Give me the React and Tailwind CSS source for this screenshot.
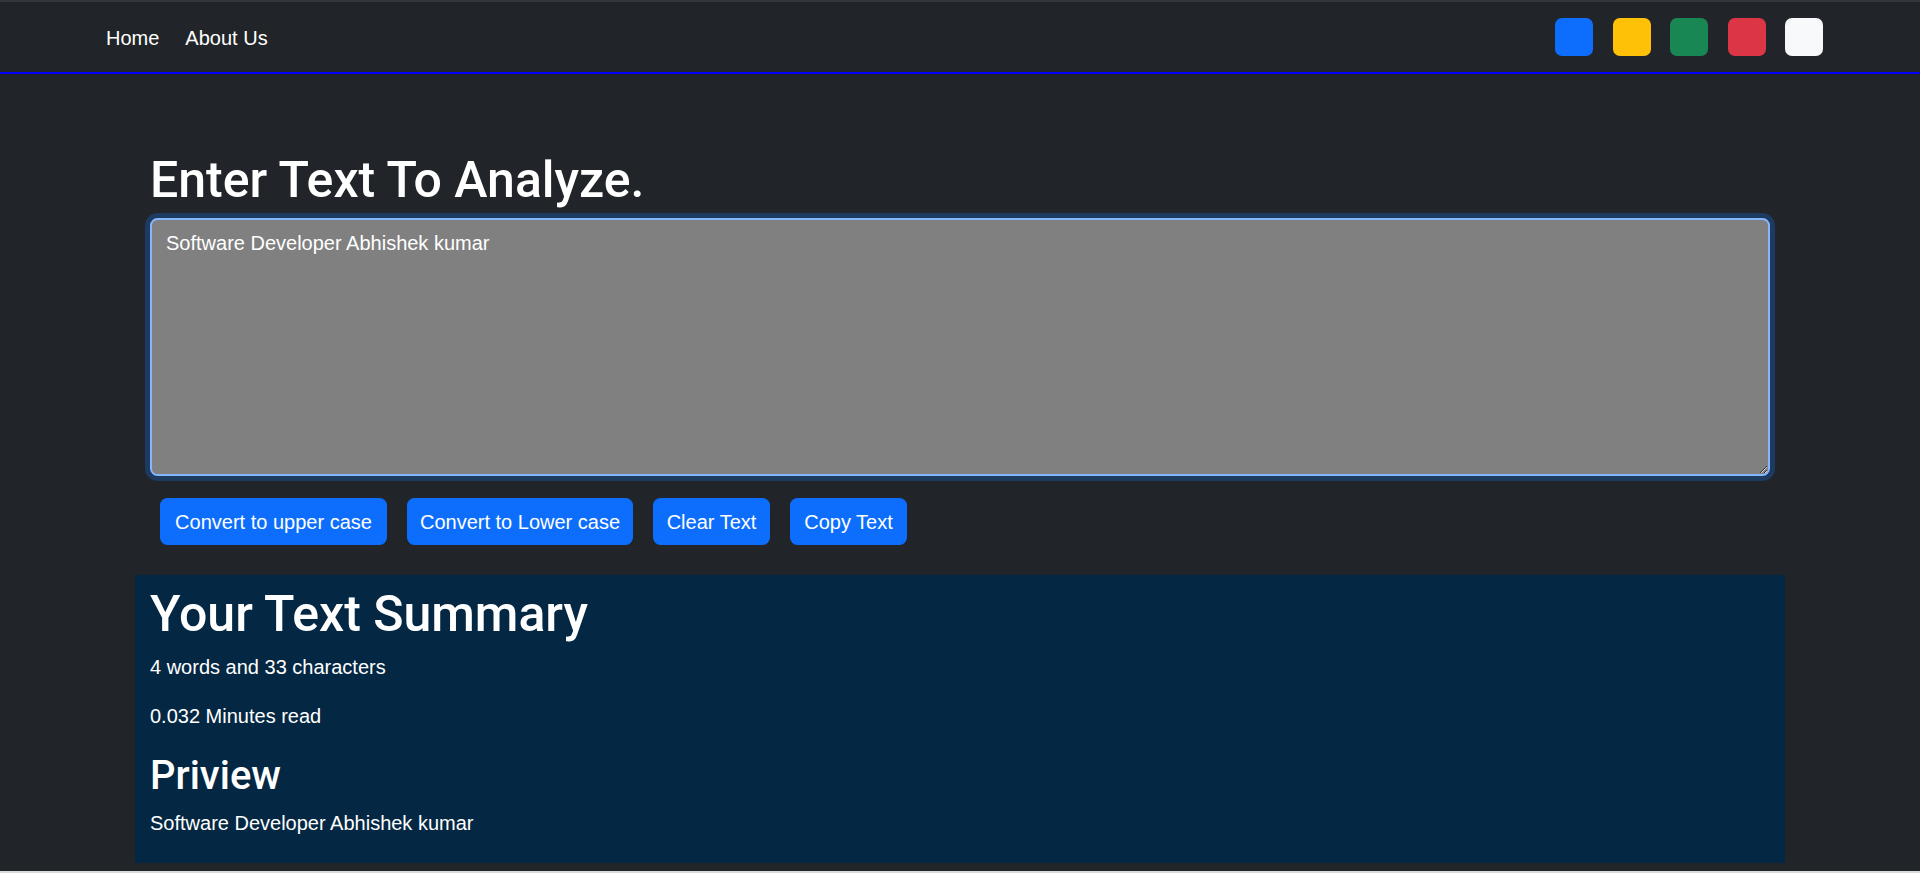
import React from "react";

const body = { fontFamily: '"Liberation Sans", Arial, sans-serif' };
const head = { fontFamily: 'Roboto, "Liberation Sans", sans-serif' };

export default function App() {
  const squares = ["bg-[#0d6efd]", "bg-[#ffc107]", "bg-[#198754]", "bg-[#dc3545]", "bg-[#f8f9fa]"];
  const text = "Software Developer Abhishek kumar";
  return (
    <div className="h-[873px] overflow-hidden flex flex-col bg-[#212529] text-white" style={body}>
      <div className="h-[2px] bg-[#33373c]" />
      <nav className="h-[72px] shrink-0 bg-[#212529] border-b-2 border-[#0000ff] flex items-center justify-between pl-[106px] pr-[97px]">
        <div className="flex gap-[26px] text-[20px] leading-[30px] pt-[2px]">
          <a className="text-white">Home</a>
          <a className="text-white">About Us</a>
        </div>
        <div className="flex gap-[19.5px]">
          {squares.map((c, i) => (
            <div key={i} className={`w-[38px] h-[38px] rounded-[7px] ${c}`} />
          ))}
        </div>
      </nav>
      <main className="flex-1 flex flex-col">
        <div className="w-[1650px] ml-[135px] px-[15px] pt-[76px]">
          <h1 className="text-[50px] leading-[60px] font-medium mb-[8px]" style={head}>
            Enter Text To Analyze.
          </h1>
          <textarea
            defaultValue={text}
            rows={8}
            className="block w-full h-[258px] bg-[#808080] text-white text-[20px] leading-[30px] pt-[8px] px-[14px] rounded-[7.5px] border-2 border-[#86b7fe] shadow-[0_0_0_5px_#1d3a60] outline-none"
            style={body}
          />
          <div className="flex gap-[20px] ml-[10px] mt-[22px]">
            <button className="w-[227px] h-[47px] rounded-[7.5px] bg-[#0d6efd] text-white text-[20px] flex items-center justify-center">Convert to upper case</button>
            <button className="w-[226px] h-[47px] rounded-[7.5px] bg-[#0d6efd] text-white text-[20px] flex items-center justify-center">Convert to Lower case</button>
            <button className="w-[117px] h-[47px] rounded-[7.5px] bg-[#0d6efd] text-white text-[20px] flex items-center justify-center">Clear Text</button>
            <button className="w-[117px] h-[47px] rounded-[7.5px] bg-[#0d6efd] text-white text-[20px] flex items-center justify-center">Copy Text</button>
          </div>
        </div>
        <section className="w-[1650px] ml-[135px] mt-[30px] bg-[#042743] px-[15px] pt-[8.5px] pb-[25px]">
          <h1 className="text-[50px] leading-[60px] font-medium" style={head}>Your Text Summary</h1>
          <p className="text-[20px] leading-[30px] mt-[8px]">4 words and 33 characters</p>
          <p className="text-[20px] leading-[30px] mt-[19px]">0.032 Minutes read</p>
          <h2 className="text-[40px] leading-[48px] font-medium mt-[21.7px]" style={head}>Priview</h2>
          <p className="text-[20px] leading-[30px] mt-[7.7px]">{text}</p>
        </section>
      </main>
      <div className="h-[2px] shrink-0 bg-[#dadada]" />
    </div>
  );
}
